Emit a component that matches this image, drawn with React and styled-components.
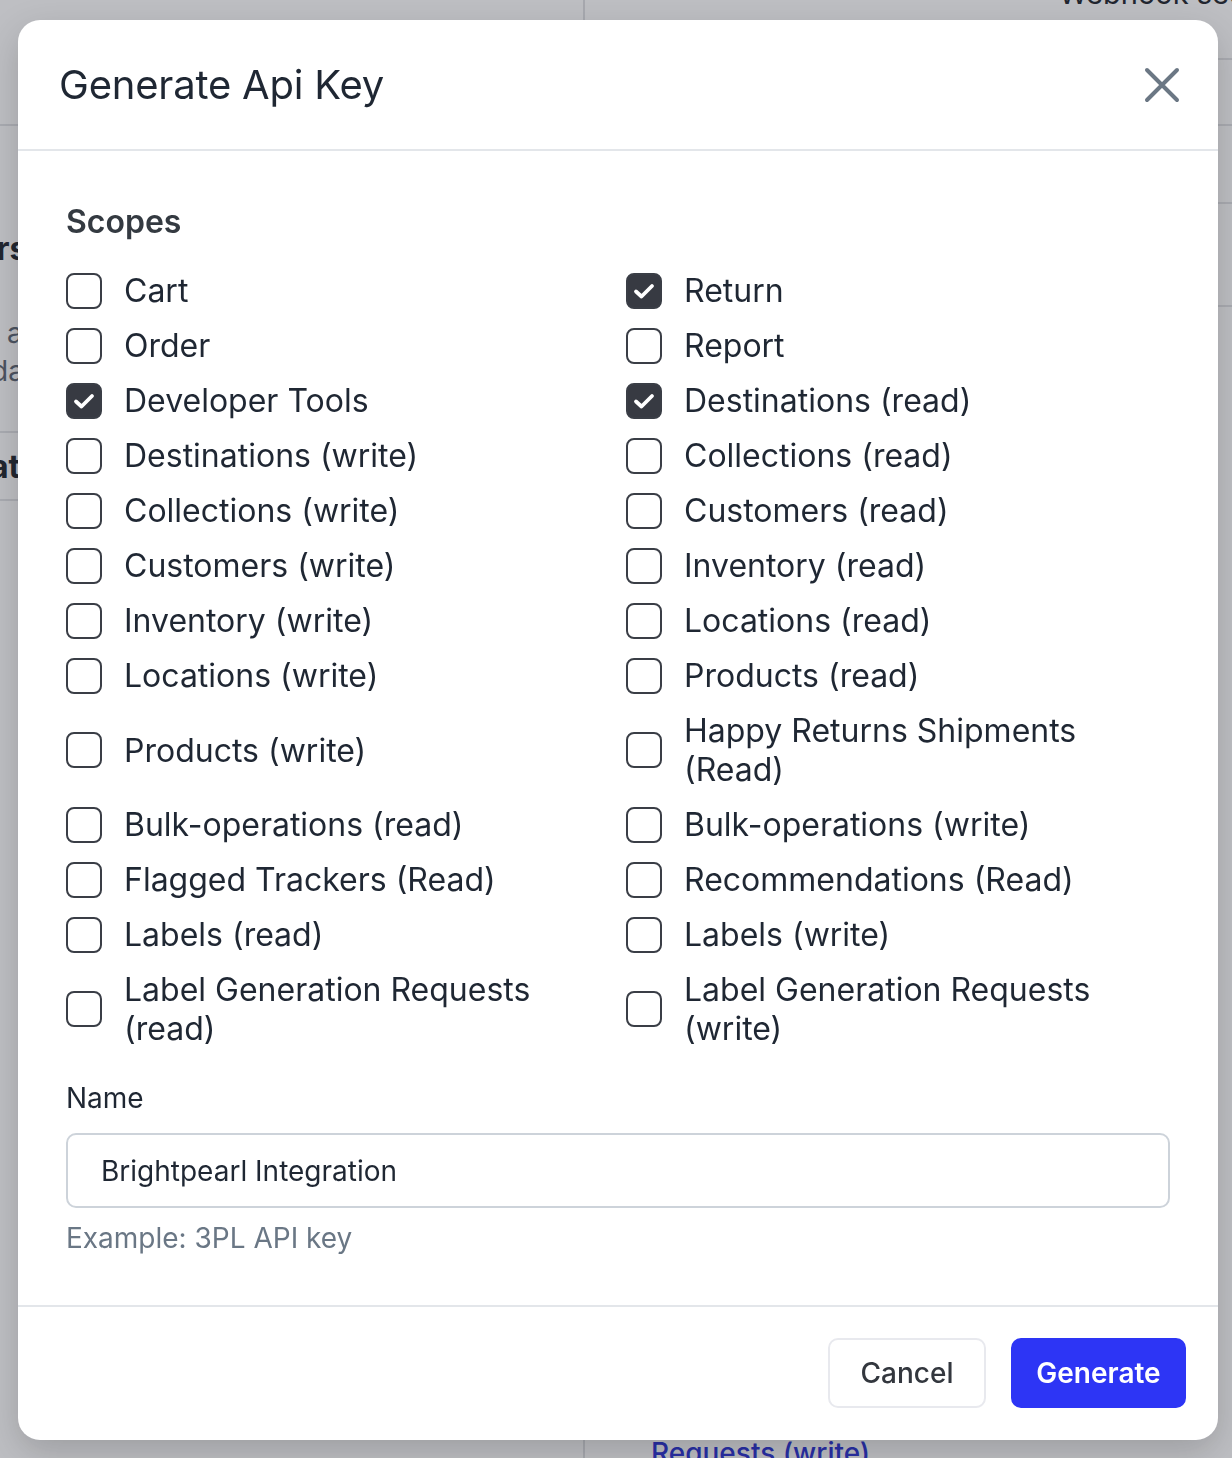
import React from "react";
import styled, { createGlobalStyle } from "styled-components";

const GlobalStyle = createGlobalStyle`
  html, body { margin: 0; padding: 0; }
  body {
    font-family: Inter, "Noto Sans", "Liberation Sans", sans-serif;
    color: #1f2733;
    -webkit-font-smoothing: antialiased;
  }
  * { box-sizing: border-box; }
`;

/* ---------- background page (behind the overlay) ---------- */
const BgPage = styled.div`
  width: 1232px;
  height: 1458px;
  background: #ffffff;
  display: grid;
  grid-template-columns: 585px 1fr;
  overflow: hidden;
`;

const BgColumn = styled.div`
  border-right: ${(p) => (p.$divider ? "2px solid #dfe0e3" : "none")};
  display: flex;
  flex-direction: column;
  overflow: hidden;
`;

const BgSection = styled.div`
  height: ${(p) => p.$h}px;
  flex-shrink: 0;
  border-bottom: ${(p) => (p.$line ? "2px solid #e2e3e6" : "none")};
  display: flex;
  flex-direction: column;
  justify-content: ${(p) => p.$justify || "center"};
  padding: ${(p) => p.$pad || "0"};
`;

const BgHeading = styled.div`
  font-size: 32px;
  font-weight: 700;
  color: #20252d;
  white-space: nowrap;
  margin-left: ${(p) => p.$shift}px;
`;

const BgText = styled.div`
  font-size: 28px;
  line-height: 38px;
  color: #5d6673;
  white-space: nowrap;
  margin-left: ${(p) => p.$shift}px;
  margin-top: ${(p) => p.$top || 0}px;
`;

const BgTopText = styled.div`
  font-size: 29px;
  line-height: 36px;
  color: #20252d;
  white-space: nowrap;
  margin: -24px 0 0 474px;
`;

const BgLink = styled.div`
  font-size: 28px;
  line-height: 34px;
  font-weight: 500;
  color: #2a32d6;
  white-space: nowrap;
  padding-left: 66px;
`;

const BgFill = styled.div`
  flex: 1;
`;

/* ---------- overlay + modal ---------- */
const Overlay = styled.div`
  position: fixed;
  inset: 0;
  background: rgba(40, 44, 56, 0.3);
  display: flex;
  align-items: flex-start;
  justify-content: flex-start;
  padding: 20px 14px 18px 18px;
`;

const Modal = styled.div`
  width: 1200px;
  height: 1420px;
  background: #ffffff;
  border-radius: 22px;
  box-shadow: 0 12px 36px rgba(0, 0, 0, 0.18);
  display: flex;
  flex-direction: column;
  overflow: hidden;
`;

const Header = styled.div`
  height: 131px;
  flex-shrink: 0;
  display: flex;
  align-items: center;
  justify-content: space-between;
  padding: 0 36px 0 41px;
  border-bottom: 2px solid #e3e6ea;
`;

const Title = styled.h2`
  margin: 0;
  font-size: 40px;
  font-weight: 400;
  line-height: 48px;
  color: #1f2733;
  letter-spacing: -0.2px;
`;

const CloseButton = styled.button`
  width: 40px;
  height: 40px;
  border: none;
  background: transparent;
  padding: 0;
  display: flex;
  align-items: center;
  justify-content: center;
  cursor: pointer;
  color: #6b7784;
`;

const Body = styled.div`
  flex: 1;
  padding: 52px 48px 0;
  display: flex;
  flex-direction: column;
`;

const SectionTitle = styled.div`
  font-size: 32px;
  font-weight: 600;
  line-height: 38px;
  color: #343a41;
  margin-bottom: 30px;
`;

const ScopeGrid = styled.div`
  display: grid;
  grid-template-columns: 1fr 1fr;
  column-gap: 16px;
  row-gap: 16px;
  align-items: center;
`;

const Option = styled.label`
  display: flex;
  align-items: center;
  gap: 22px;
  cursor: pointer;
`;

const Box = styled.span`
  width: 36px;
  height: 36px;
  flex-shrink: 0;
  border-radius: 8px;
  border: 2px solid #3a3e46;
  background: ${(p) => (p.$checked ? "#373a42" : "#ffffff")};
  display: flex;
  align-items: center;
  justify-content: center;
`;

const OptionText = styled.span`
  font-size: 32px;
  line-height: 39px;
  color: #1f2733;
`;

const Field = styled.div`
  margin-top: 33px;
  display: flex;
  flex-direction: column;
`;

const FieldLabel = styled.div`
  font-size: 28px;
  line-height: 34px;
  color: #1f2733;
  margin-bottom: 18px;
`;

const TextInput = styled.input`
  width: 100%;
  height: 75px;
  border: 2px solid #cdd3da;
  border-radius: 10px;
  padding: 0 33px;
  font-family: inherit;
  font-size: 28px;
  color: #1f2733;
  background: #ffffff;
  outline: none;
`;

const Hint = styled.div`
  margin-top: 13px;
  font-size: 28px;
  line-height: 34px;
  color: #6a7785;
`;

const Footer = styled.div`
  height: 135px;
  flex-shrink: 0;
  border-top: 2px solid #e3e6ea;
  display: flex;
  align-items: center;
  justify-content: flex-end;
  gap: 25px;
  padding: 0 32px 2px;
`;

const Button = styled.button`
  height: 70px;
  width: ${(p) => (p.$primary ? 175 : 158)}px;
  padding: 0;
  border-radius: 10px;
  font-family: inherit;
  font-size: 28px;
  font-weight: ${(p) => (p.$primary ? 600 : 500)};
  color: ${(p) => (p.$primary ? "#ffffff" : "#33373e")};
  background: ${(p) => (p.$primary ? "#2d35f5" : "#ffffff")};
  border: 2px solid ${(p) => (p.$primary ? "#2d35f5" : "#e8e9ee")};
  cursor: pointer;
`;

const CheckIcon = () => (
  <svg width="26" height="26" viewBox="0 0 26 26" fill="none">
    <path
      d="M5 13.5 L10.5 18.5 L21 8"
      stroke="#ffffff"
      strokeWidth="3.8"
      strokeLinecap="round"
      strokeLinejoin="round"
    />
  </svg>
);

const CloseIcon = () => (
  <svg width="36" height="36" viewBox="0 0 36 36" fill="none">
    <path
      d="M3 3 L33 33 M33 3 L3 33"
      stroke="currentColor"
      strokeWidth="4"
      strokeLinecap="round"
    />
  </svg>
);

const left = [
  ["Cart", false],
  ["Order", false],
  ["Developer Tools", true],
  ["Destinations (write)", false],
  ["Collections (write)", false],
  ["Customers (write)", false],
  ["Inventory (write)", false],
  ["Locations (write)", false],
  ["Products (write)", false],
  ["Bulk-operations (read)", false],
  ["Flagged Trackers (Read)", false],
  ["Labels (read)", false],
  ["Label Generation Requests (read)", false],
];

const right = [
  ["Return", true],
  ["Report", false],
  ["Destinations (read)", true],
  ["Collections (read)", false],
  ["Customers (read)", false],
  ["Inventory (read)", false],
  ["Locations (read)", false],
  ["Products (read)", false],
  ["Happy Returns Shipments (Read)", false],
  ["Bulk-operations (write)", false],
  ["Recommendations (Read)", false],
  ["Labels (write)", false],
  ["Label Generation Requests (write)", false],
];

const ScopeOption = ({ label, checked }) => (
  <Option>
    <Box $checked={checked}>{checked && <CheckIcon />}</Box>
    <OptionText>{label}</OptionText>
  </Option>
);

export default function App() {
  const items = [];
  left.forEach((l, i) => {
    items.push(<ScopeOption key={"l" + i} label={l[0]} checked={l[1]} />);
    items.push(<ScopeOption key={"r" + i} label={right[i][0]} checked={right[i][1]} />);
  });

  return (
    <>
      <GlobalStyle />
      <BgPage>
        <BgColumn $divider>
          <BgSection $h={126} $line />
          <BgSection $h={307} $line $justify="flex-start" $pad="103px 0 0">
            <BgHeading $shift={-64}>Users</BgHeading>
            <BgText $shift={7} $top={46}>a</BgText>
            <BgText $shift={-9}>da</BgText>
          </BgSection>
          <BgSection $h={68} $line>
            <BgHeading $shift={-90}>Format</BgHeading>
          </BgSection>
          <BgFill />
        </BgColumn>
        <BgColumn>
          <BgSection $h={60} $line $justify="flex-start">
            <BgTopText>Webhook secret</BgTopText>
          </BgSection>
          <BgSection $h={66} $line />
          <BgSection $h={78} $line />
          <BgSection $h={103} $line />
          <BgFill />
          <BgSection $h={22} $justify="flex-start">
            <BgLink>Requests (write)</BgLink>
          </BgSection>
        </BgColumn>
      </BgPage>

      <Overlay>
        <Modal>
          <Header>
            <Title>Generate Api Key</Title>
            <CloseButton aria-label="Close">
              <CloseIcon />
            </CloseButton>
          </Header>
          <Body>
            <SectionTitle>Scopes</SectionTitle>
            <ScopeGrid>{items}</ScopeGrid>
            <Field>
              <FieldLabel>Name</FieldLabel>
              <TextInput defaultValue="Brightpearl Integration" />
              <Hint>Example: 3PL API key</Hint>
            </Field>
          </Body>
          <Footer>
            <Button>Cancel</Button>
            <Button $primary>Generate</Button>
          </Footer>
        </Modal>
      </Overlay>
    </>
  );
}
